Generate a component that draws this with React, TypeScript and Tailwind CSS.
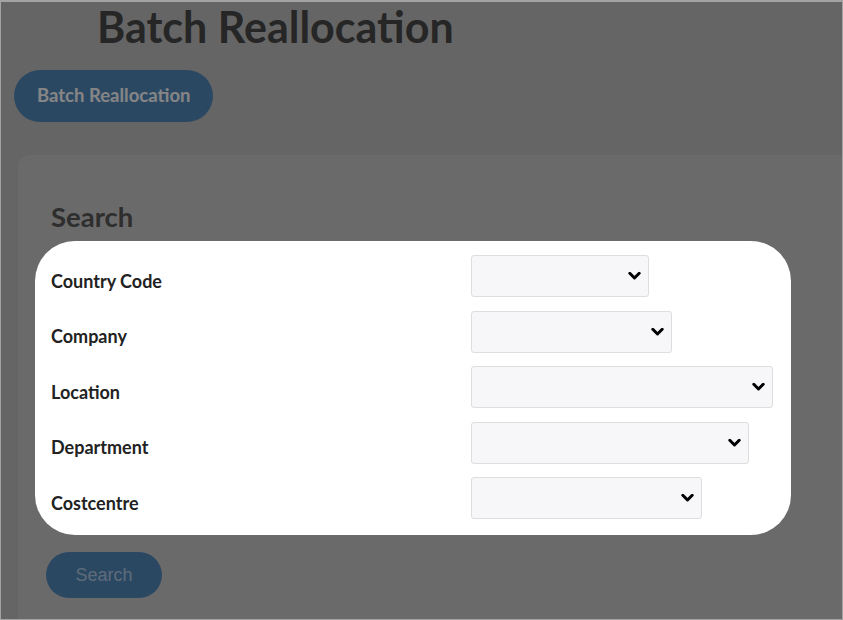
const fields = [
  { label: "Country Code", width: 178 },
  { label: "Company", width: 201 },
  { label: "Location", width: 302 },
  { label: "Department", width: 278 },
  { label: "Costcentre", width: 231 },
];

const Chevron = () => (
  <svg width="13" height="9" viewBox="0 0 13 9" className="absolute right-[7px] top-1/2 -translate-y-1/2">
    <polyline points="1.8,1.8 6.5,6.5 11.2,1.8" fill="none" stroke="#000" strokeWidth="3" strokeLinecap="round" strokeLinejoin="round" />
  </svg>
);

export default function App() {
  return (
    <div className="relative h-[620px] w-[843px] overflow-hidden bg-[#c2c2c2] border border-t-2 border-[#a3a3a3] font-['Lato',sans-serif]">
      {/* Header */}
      <h1 className="ml-[96px] text-[43px] leading-[50px] font-bold text-[#494949]">Batch Reallocation</h1>
      <button className="mt-[18px] ml-[13px] h-[52px] px-[23px] rounded-full bg-[#548bbf] text-white text-[18.5px] font-bold">
        Batch Reallocation
      </button>

      {/* Search card */}
      <div className="mt-[33px] ml-[17px] h-[600px] rounded-tl-[12px] bg-[#cbcbcb] pl-[33px] pt-[45px]">
        <h2 className="text-[27.5px] leading-[34px] font-bold text-[#585858]">Search</h2>

        <div className="relative mt-[21px] w-[740px]">
          {/* tour spotlight */}
          <div className="absolute left-[-16px] top-[-14px] w-[756px] h-[294px] rounded-[40px] bg-white shadow-[0_0_0_5000px_rgba(0,0,0,0.48)]" />

          <div className="relative z-10 flex flex-col gap-[13.5px]">
            {fields.map(f => (
              <div key={f.label} className="flex items-center">
                <div className="w-[420px] pt-[9px] text-[18px] leading-[20px] font-bold text-[#222]">{f.label}</div>
                <div
                  className="relative h-[42px] rounded-[3px] border border-[#dedede] bg-[#f7f7f9]"
                  style={{ width: f.width }}
                >
                  <Chevron />
                </div>
              </div>
            ))}
          </div>
        </div>

        <button className="mt-[33px] ml-[-5px] h-[46px] w-[116px] rounded-full bg-[#548bbf] text-[#b3cee9] text-[18px] font-['Liberation_Sans',Arial,sans-serif]">
          Search
        </button>
      </div>
    </div>
  );
}
